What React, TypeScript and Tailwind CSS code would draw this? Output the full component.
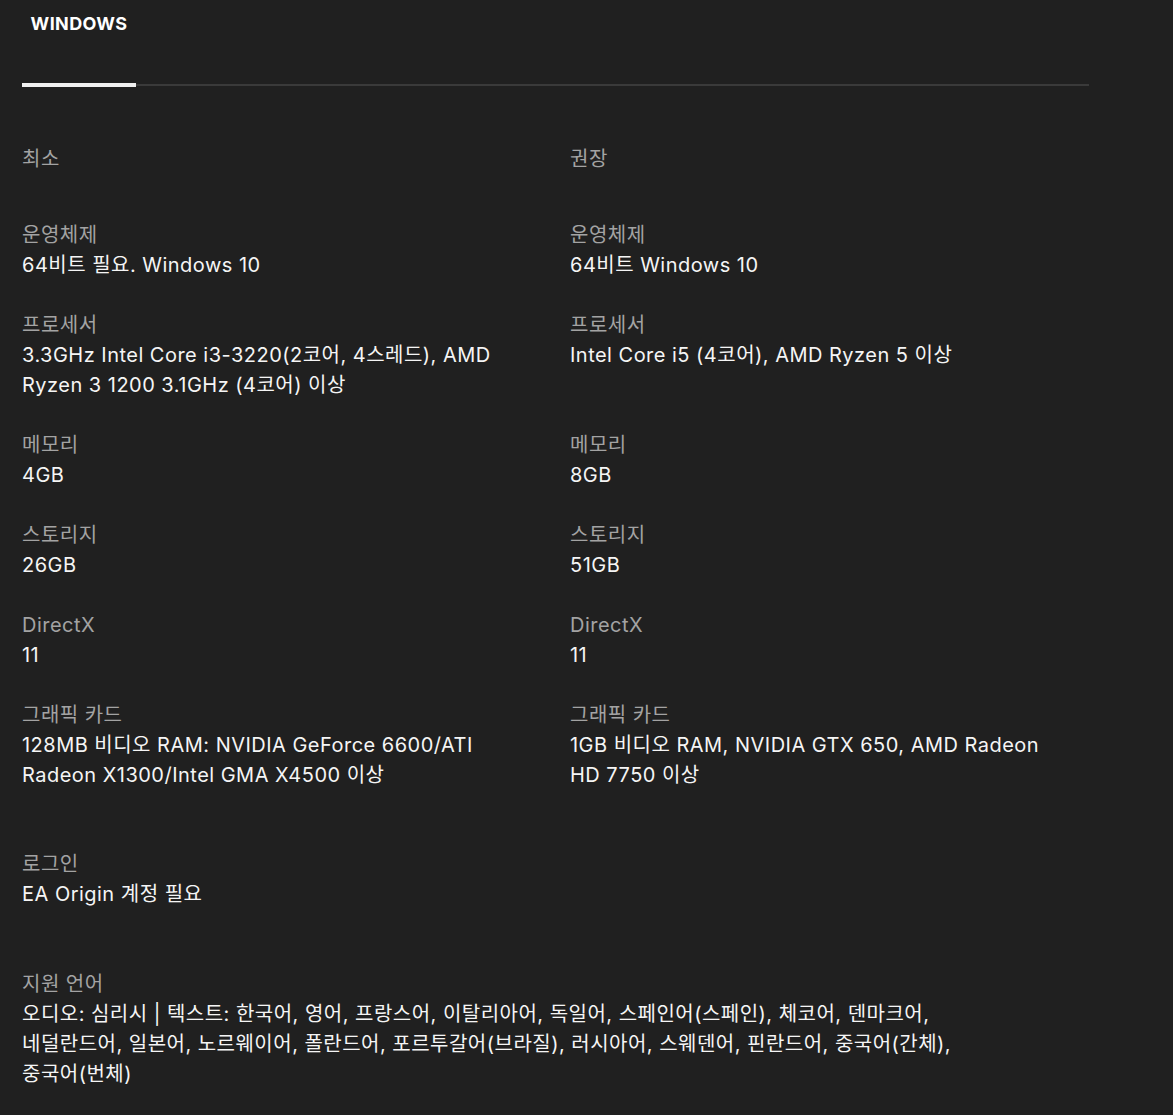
const font = { fontFamily: 'Inter, "Noto Sans CJK KR", sans-serif' }

type Row = { label: string; min: string; rec: string }

const rows: Row[] = [
  { label: "운영체제", min: "64비트 필요. Windows 10", rec: "64비트 Windows 10" },
  {
    label: "프로세서",
    min: "3.3GHz Intel Core i3-3220(2코어, 4스레드), AMD Ryzen 3 1200 3.1GHz (4코어) 이상",
    rec: "Intel Core i5 (4코어), AMD Ryzen 5 이상",
  },
  { label: "메모리", min: "4GB", rec: "8GB" },
  { label: "스토리지", min: "26GB", rec: "51GB" },
  { label: "DirectX", min: "11", rec: "11" },
  {
    label: "그래픽 카드",
    min: "128MB 비디오 RAM: NVIDIA GeForce 6600/ATI Radeon X1300/Intel GMA X4500 이상",
    rec: "1GB 비디오 RAM, NVIDIA GTX 650, AMD Radeon HD 7750 이상",
  },
]

function Spec({ label, value }: { label: string; value: string }) {
  return (
    <div>
      <div className="text-[20px] leading-[30px] text-[#a3a3a3]">{label}</div>
      <div className="text-[20px] leading-[30px] text-[#f5f5f5] break-keep">{value}</div>
    </div>
  )
}

export default function App() {
  return (
    <div className="min-h-screen bg-[#202020] tracking-[0.03em]" style={font}>
      <div className="ml-[22px] w-[1067px]">
        <nav className="flex border-b-2 border-[#3a3a3a]">
          <button className="relative w-[114px] pt-[10px] pb-[46px] text-[18px] leading-[28px] font-bold tracking-[0.02em] text-white">
            WINDOWS
            <span className="absolute left-0 right-0 -bottom-[3px] h-[4px] bg-[#f0f0f0]" />
          </button>
        </nav>

        <div className="pt-[58px] flex flex-col gap-[30px]">
          <div className="grid grid-cols-[519px_480px] gap-x-[29px] mb-[16px]">
            <h3 className="text-[20px] leading-[30px] text-[#a3a3a3]">최소</h3>
            <h3 className="text-[20px] leading-[30px] text-[#a3a3a3]">권장</h3>
          </div>
          {rows.map((r) => (
            <div key={r.label} className="grid grid-cols-[519px_480px] gap-x-[29px]">
              <Spec label={r.label} value={r.min} />
              <Spec label={r.label} value={r.rec} />
            </div>
          ))}
        </div>

        <div className="mt-[59px]">
          <Spec label="로그인" value="EA Origin 계정 필요" />
        </div>

        <div className="mt-[60px] pb-[28px] w-[960px]">
          <Spec
            label="지원 언어"
            value="오디오: 심리시 | 텍스트: 한국어, 영어, 프랑스어, 이탈리아어, 독일어, 스페인어(스페인), 체코어, 덴마크어, 네덜란드어, 일본어, 노르웨이어, 폴란드어, 포르투갈어(브라질), 러시아어, 스웨덴어, 핀란드어, 중국어(간체), 중국어(번체)"
          />
        </div>
      </div>
    </div>
  )
}
